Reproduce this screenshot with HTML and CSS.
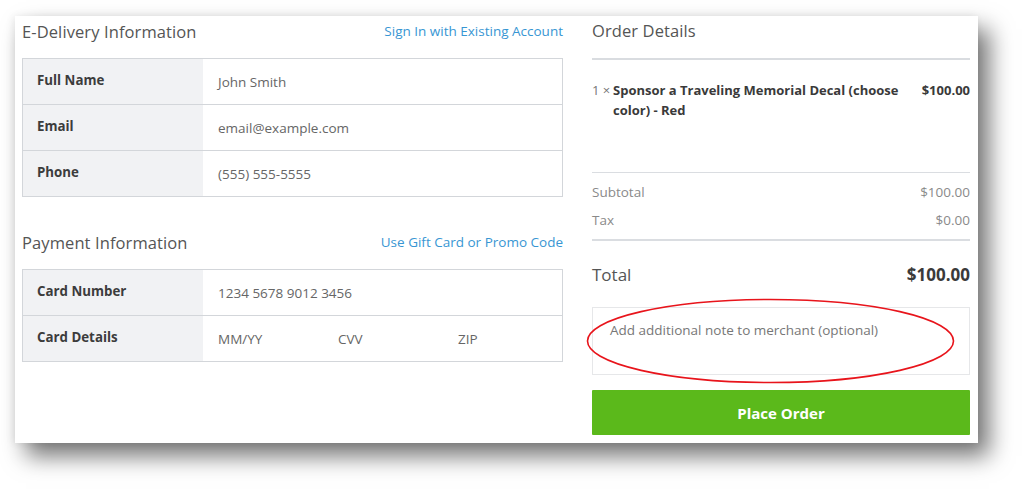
FILE: index.html
```html
<!DOCTYPE html>
<html>
<head>
<meta charset="utf-8">
<link rel="stylesheet" href="styles.css">
</head>
<body>
<div class="card">
  <div class="left">
    <div class="section-head">
      <h2>E-Delivery Information</h2>
      <a class="link">Sign In with Existing Account</a>
    </div>
    <div class="table">
      <div class="row"><div class="label">Full Name</div><div class="value">John Smith</div></div>
      <div class="row"><div class="label">Email</div><div class="value">email@example.com</div></div>
      <div class="row"><div class="label">Phone</div><div class="value">(555) 555-5555</div></div>
    </div>
    <div class="section-head pay-head">
      <h2>Payment Information</h2>
      <a class="link">Use Gift Card or Promo Code</a>
    </div>
    <div class="table">
      <div class="row"><div class="label">Card Number</div><div class="value">1234 5678 9012 3456</div></div>
      <div class="row"><div class="label">Card Details</div><div class="value split"><span>MM/YY</span><span>CVV</span><span>ZIP</span></div></div>
    </div>
  </div>
  <div class="right">
    <div class="order-head"><h2>Order Details</h2></div>
    <div class="item">
      <span class="qty">1 ×</span>
      <span class="item-name">Sponsor a Traveling Memorial Decal (choose color) - Red</span>
      <span class="item-price">$100.00</span>
    </div>
    <div class="sums">
      <div class="sum-row"><span>Subtotal</span><span>$100.00</span></div>
      <div class="sum-row"><span>Tax</span><span>$0.00</span></div>
    </div>
    <div class="total"><span>Total</span><span class="total-val">$100.00</span></div>
    <div class="note">
      <span class="placeholder">Add additional note to merchant (optional)</span>
      <svg class="circle" width="371" height="88" viewBox="0 0 371 88"><ellipse cx="185.5" cy="44" rx="183" ry="41.5" fill="none" stroke="#e8141b" stroke-width="1.6"/></svg>
    </div>
    <div class="button">Place Order</div>
  </div>
</div>
</body>
</html>
```
FILE: styles.css
```css
html, body { margin: 0; padding: 0; background: #fff; }
body { font-family: "Open Sans", "Liberation Sans", sans-serif; width: 1024px; height: 502px; overflow: hidden; }
.card {
  margin: 16px 0 0 15px;
  width: 963px;
  height: 427px;
  box-sizing: border-box;
  background: #fff;
  box-shadow: 11px 13px 22px rgba(0,0,0,0.55), -2px 0 8px rgba(0,0,0,0.07);
  display: flex;
  padding: 0 8px 0 7px;
  gap: 29px;
}
.left { width: 541px; flex: none; }
.right { width: 378px; flex: none; }
h2 { margin: 0; font-weight: 400; font-size: 16.5px; color: #555; letter-spacing: 0.1px; }
.section-head { height: 30px; display: flex; align-items: center; justify-content: space-between; margin-bottom: 12px; }
.pay-head { margin-top: 30px; margin-bottom: 12px; }
.link { color: #3896d3; font-size: 13.5px; }
.table { border: 1px solid #d3d6da; }
.row { display: flex; height: 45px; }
.row + .row { border-top: 1px solid #d3d6da; }
.label { width: 180px; flex: none; background: #f1f2f4; font-weight: 700; font-size: 13.3px; color: #3c3c3c; padding-left: 14px; box-sizing: border-box; display: flex; align-items: center; padding-bottom: 3px; }
.value { padding-left: 15px; font-size: 13.5px; color: #666; display: flex; align-items: center; flex: 1; }
.split span { width: 120px; }
.order-head { height: 41px; border-bottom: 2px solid #d9dce0; display: flex; align-items: center; padding-bottom: 1px; box-sizing: content-box; }
.order-head h2 { margin-top: -12px; }
.item { display: flex; align-items: flex-start; padding-top: 20px; height: 92px; border-bottom: 1px solid #dadde1; font-size: 13px; line-height: 20px; }
.qty { color: #777; width: 21px; flex: none; }
.item-name { font-weight: 700; color: #3a3a3a; width: 295px; flex: none; }
.item-price { font-weight: 700; color: #3a3a3a; margin-left: auto; }
.sums { padding-top: 5px; height: 61px; border-bottom: 2px solid #dadde1; }
.sum-row { display: flex; justify-content: space-between; font-size: 13.5px; color: #8a8a8a; height: 28px; align-items: center; }
.total { display: flex; justify-content: space-between; align-items: center; height: 66px; font-size: 17px; color: #555; }
.total-val { font-weight: 700; color: #3a3a3a; }
.note { position: relative; height: 66px; border: 1px solid #e6e7e9; box-sizing: content-box; }
.placeholder { display: block; padding: 13px 0 0 17px; font-size: 13.5px; color: #777; }
.circle { position: absolute; left: -8px; top: -11px; }
.button { margin-top: 15px; height: 45px; background: #5bb91b; color: #fff; font-weight: 700; font-size: 15px; display: flex; align-items: center; justify-content: center; border-radius: 1px; }
```
